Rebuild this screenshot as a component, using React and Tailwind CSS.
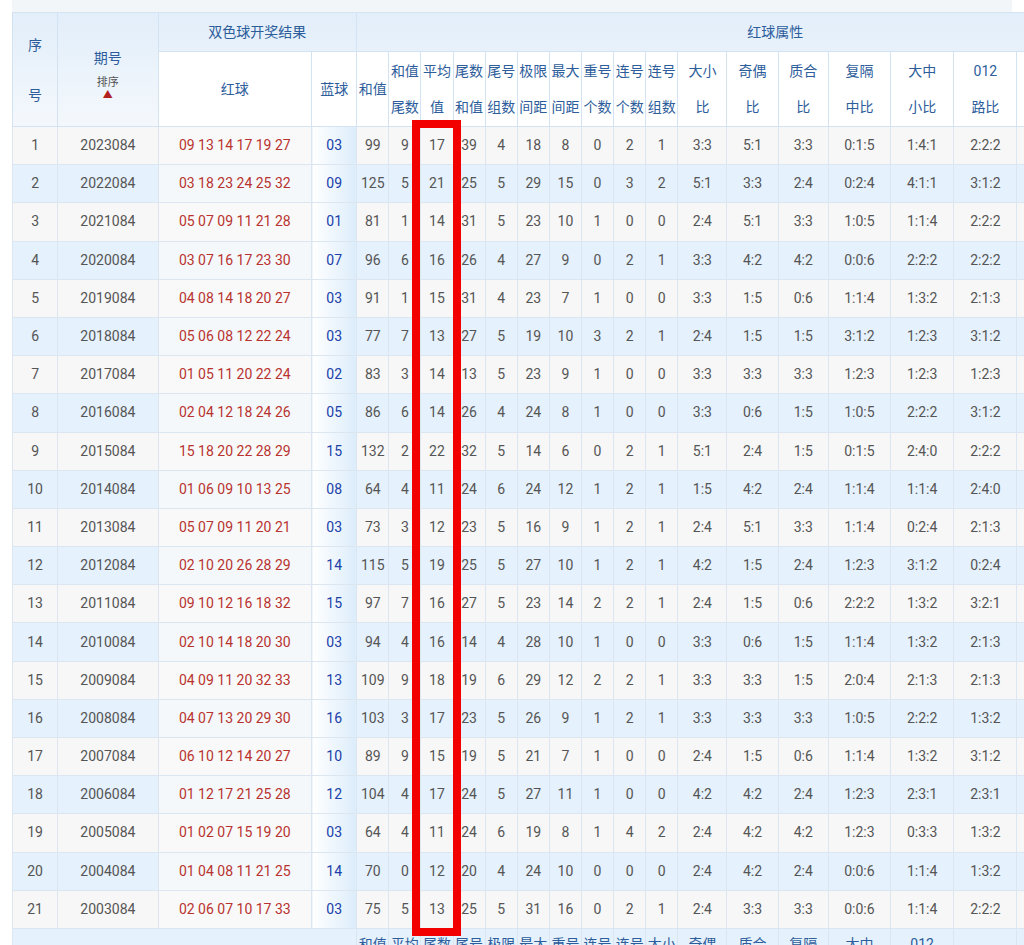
import React from 'react';

const rows = [
  ['1','2023084','09 13 14 17 19 27','03','99','9','17','39','4','18','8','0','2','1','3:3','5:1','3:3','0:1:5','1:4:1','2:2:2'],
  ['2','2022084','03 18 23 24 25 32','09','125','5','21','25','5','29','15','0','3','2','5:1','3:3','2:4','0:2:4','4:1:1','3:1:2'],
  ['3','2021084','05 07 09 11 21 28','01','81','1','14','31','5','23','10','1','0','0','2:4','5:1','3:3','1:0:5','1:1:4','2:2:2'],
  ['4','2020084','03 07 16 17 23 30','07','96','6','16','26','4','27','9','0','2','1','3:3','4:2','4:2','0:0:6','2:2:2','2:2:2'],
  ['5','2019084','04 08 14 18 20 27','03','91','1','15','31','4','23','7','1','0','0','3:3','1:5','0:6','1:1:4','1:3:2','2:1:3'],
  ['6','2018084','05 06 08 12 22 24','03','77','7','13','27','5','19','10','3','2','1','2:4','1:5','1:5','3:1:2','1:2:3','3:1:2'],
  ['7','2017084','01 05 11 20 22 24','02','83','3','14','13','5','23','9','1','0','0','3:3','3:3','3:3','1:2:3','1:2:3','1:2:3'],
  ['8','2016084','02 04 12 18 24 26','05','86','6','14','26','4','24','8','1','0','0','3:3','0:6','1:5','1:0:5','2:2:2','3:1:2'],
  ['9','2015084','15 18 20 22 28 29','15','132','2','22','32','5','14','6','0','2','1','5:1','2:4','1:5','0:1:5','2:4:0','2:2:2'],
  ['10','2014084','01 06 09 10 13 25','08','64','4','11','24','6','24','12','1','2','1','1:5','4:2','2:4','1:1:4','1:1:4','2:4:0'],
  ['11','2013084','05 07 09 11 20 21','03','73','3','12','23','5','16','9','1','2','1','2:4','5:1','3:3','1:1:4','0:2:4','2:1:3'],
  ['12','2012084','02 10 20 26 28 29','14','115','5','19','25','5','27','10','1','2','1','4:2','1:5','2:4','1:2:3','3:1:2','0:2:4'],
  ['13','2011084','09 10 12 16 18 32','15','97','7','16','27','5','23','14','2','2','1','2:4','1:5','0:6','2:2:2','1:3:2','3:2:1'],
  ['14','2010084','02 10 14 18 20 30','03','94','4','16','14','4','28','10','1','0','0','3:3','0:6','1:5','1:1:4','1:3:2','2:1:3'],
  ['15','2009084','04 09 11 20 32 33','13','109','9','18','19','6','29','12','2','2','1','3:3','3:3','1:5','2:0:4','2:1:3','2:1:3'],
  ['16','2008084','04 07 13 20 29 30','16','103','3','17','23','5','26','9','1','2','1','3:3','3:3','3:3','1:0:5','2:2:2','1:3:2'],
  ['17','2007084','06 10 12 14 20 27','10','89','9','15','19','5','21','7','1','0','0','2:4','1:5','0:6','1:1:4','1:3:2','3:1:2'],
  ['18','2006084','01 12 17 21 25 28','12','104','4','17','24','5','27','11','1','0','0','4:2','4:2','2:4','1:2:3','2:3:1','2:3:1'],
  ['19','2005084','01 02 07 15 19 20','03','64','4','11','24','6','19','8','1','4','2','2:4','4:2','4:2','1:2:3','0:3:3','1:3:2'],
  ['20','2004084','01 04 08 11 21 25','14','70','0','12','20','4','24','10','0','0','0','2:4','4:2','2:4','0:0:6','1:1:4','1:3:2'],
  ['21','2003084','02 06 07 10 17 33','03','75','5','13','25','5','31','16','0','2','1','2:4','3:3','3:3','0:0:6','1:1:4','2:2:2'],
];

const widths = [45,100,153,45,32,32,32,32,32,32,32,32,32,32,49,51,50,62,63,63,40];

const subHead = [
  ['和值','尾数'],['平均','值'],['尾数','和值'],['尾号','组数'],['极限','间距'],['最大','间距'],['重号','个数'],['连号','个数'],['连号','组数'],
  ['大小','比'],['奇偶','比'],['质合','比'],['复隔','中比'],['大中','小比'],['012','路比'],
];

const th = 'border border-[#d3e3f1] text-[#2d5d9b] font-normal text-[14px] leading-[38px]';

export default function App() {
  return (
    <div className="relative w-[1024px] h-[945px] overflow-hidden bg-white" style={{ fontFamily: 'Roboto, "Noto Sans CJK SC", sans-serif' }}>
      <div className="h-[12px] bg-[#f3f6f9] mx-[12px]" />
      <table className="table-fixed border-collapse ml-[12px] w-[1046px] text-[14px] text-[#555]">
        <colgroup>
          {widths.map((w, i) => <col key={i} style={{ width: w }} />)}
        </colgroup>
        <thead className="bg-gradient-to-b from-[#e2eefa] to-[#f4f8fc]">
          <tr className="h-[38px]">
            <th rowSpan={2} className={th + ' leading-[50px]'}>序<br />号</th>
            <th rowSpan={2} className={th}>
              <div className="leading-[36px]">期号</div>
              <div className="text-[11px] leading-[14px] text-[#555]">排序</div>
              <div className="text-[#b32020] text-[10px] leading-[10px]">▲</div>
            </th>
            <th colSpan={2} className={th}>双色球开奖结果</th>
            <th colSpan={17} className={th + ' text-left pl-[390px]'}>红球属性</th>
          </tr>
          <tr className="h-[75px] bg-white">
            <th className={th}>红球</th>
            <th className={th}>蓝球</th>
            <th className={th + ' px-0'}>和值</th>
            {subHead.map((s, i) => (
              <th key={i} className={th + ' px-0 whitespace-nowrap'}>
                <div className="leading-[36px]">{s[0]}</div>
                <div className="leading-[36px]">{s[1]}</div>
              </th>
            ))}
            <th className={th}></th>
          </tr>
        </thead>
        <tbody>
          {rows.map((r, ri) => {
            const even = ri % 2 === 1;
            return (
              <tr key={ri} className={'h-[38.2px] ' + (even ? 'bg-[#e5f1fc]' : 'bg-[#f7f7f7]')}>
                {r.map((c, ci) => (
                  <td key={ci} className={
                    'border border-[#dbe6f0] text-center p-0 whitespace-nowrap ' +
                    (ci === 2 ? 'text-[#b8332f] ' + (even ? 'bg-[#f5f8fb]' : 'bg-[#f9f9f9]') : '') +
                    (ci === 3 ? 'text-[#2040a8] bg-gradient-to-r from-[#ffffff] to-[#dcecfa]' : '')
                  }>{c}</td>
                ))}
                <td className="border border-[#dbe6f0]"></td>
              </tr>
            );
          })}
          <tr className="h-[40px] bg-[#e5f1fc]">
            <td className="border border-[#dbe6f0]" colSpan={4}></td>
            {['和值','平均','尾数','尾号','极限','最大','重号','连号','连号','大小','奇偶','质合','复隔','大中','012'].map((t, i) => (
              <td key={i} className="border border-[#dbe6f0] text-center align-top pt-[6px] text-[#2d5d9b] whitespace-nowrap leading-[18px]">{t}</td>
            ))}
            <td className="border border-[#dbe6f0]"></td>
            <td className="border border-[#dbe6f0]"></td>
          </tr>
        </tbody>
      </table>
      <div className="absolute left-[412px] top-[120px] w-[49px] h-[816px] border-[8px] border-[#f20000]" />
    </div>
  );
}
